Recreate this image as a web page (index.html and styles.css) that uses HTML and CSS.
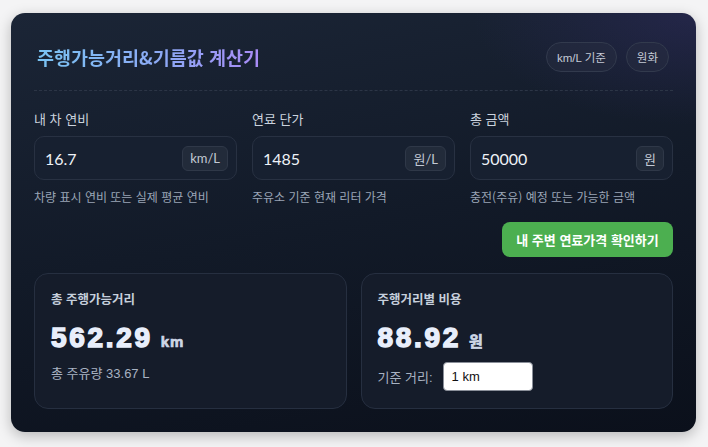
FILE: index.html
```html
<!DOCTYPE html>
<html lang="ko">
<head>
<meta charset="utf-8">
<link rel="stylesheet" href="styles.css">
</head>
<body>
<div class="card">
  <div class="head">
    <h1 class="title">주행가능거리&amp;기름값 계산기</h1>
    <div class="pills">
      <span class="pill">km/L 기준</span>
      <span class="pill">원화</span>
    </div>
  </div>
  <div class="fields">
    <div class="field">
      <div class="label">내 차 연비</div>
      <div class="box"><span class="val">16.7</span><span class="unit">km/L</span></div>
      <div class="help">차량 표시 연비 또는 실제 평균 연비</div>
    </div>
    <div class="field">
      <div class="label">연료 단가</div>
      <div class="box"><span class="val">1485</span><span class="unit">원/L</span></div>
      <div class="help">주유소 기준 현재 리터 가격</div>
    </div>
    <div class="field">
      <div class="label">총 금액</div>
      <div class="box"><span class="val">50000</span><span class="unit">원</span></div>
      <div class="help">충전(주유) 예정 또는 가능한 금액</div>
    </div>
  </div>
  <div class="actions">
    <button class="btn">내 주변 연료가격 확인하기</button>
  </div>
  <div class="results">
    <div class="res">
      <div class="res-title">총 주행가능거리</div>
      <div class="big"><span class="num">562.29</span><span class="u">km</span></div>
      <div class="sub">총 주유량 33.67 L</div>
    </div>
    <div class="res">
      <div class="res-title">주행거리별 비용</div>
      <div class="big"><span class="num">88.92</span><span class="u">원</span></div>
      <div class="sub row"><span>기준 거리:</span><span class="sel">1 km</span></div>
    </div>
  </div>
</div>
</body>
</html>
```
FILE: styles.css
```css
* { box-sizing: border-box; }
html, body { margin: 0; }
body {
  background: #f4f4f5;
  padding: 13px 12px 15px 11px;
  font-family: Lato, "Noto Sans CJK KR", sans-serif;
}
.card {
  height: 419px;
  border-radius: 14px;
  padding: 23px 23px 0 23px;
  background:
    radial-gradient(ellipse 320px 160px at 100% 0%, rgba(60, 50, 120, 0.35), transparent 70%),
    linear-gradient(170deg, #1b2536 0%, #121a28 50%, #0b101b 100%);
  box-shadow: 0 4px 14px rgba(0, 0, 0, 0.25);
  color: #e2e8f0;
}
.head {
  display: flex;
  justify-content: space-between;
  align-items: center;
  padding: 6px 4px 18px 3px;
  border-bottom: 1px dashed #2c3546;
}
.title {
  margin: 0;
  font-family: "Noto Sans CJK KR", sans-serif;
  font-size: 18.5px;
  font-weight: 700;
  line-height: 26px;
  background: linear-gradient(90deg, #79c3f2 0%, #8ea6f5 60%, #a98bf6 100%);
  -webkit-background-clip: text;
  background-clip: text;
  color: transparent;
}
.pills { display: flex; gap: 9px; }
.pill {
  height: 30px;
  padding: 0 10px;
  display: flex;
  align-items: center;
  border: 1px solid #323a4d;
  border-radius: 16px;
  background: rgba(40, 46, 66, 0.5);
  font-family: "Liberation Sans", "Noto Sans CJK KR", sans-serif;
  font-size: 11.5px;
  color: #c4cad6;
}
.fields {
  display: grid;
  grid-template-columns: 1fr 1fr 1fr;
  gap: 15px;
  margin-top: 19px;
}
.label {
  font-family: "Noto Sans CJK KR", sans-serif;
  font-size: 13px;
  color: #cbd3de;
  line-height: 18px;
}
.box {
  margin-top: 8px;
  height: 44px;
  border: 1px solid #283142;
  border-radius: 10px;
  background: #172030;
  display: flex;
  align-items: center;
  justify-content: space-between;
  padding: 0 8px 0 10px;
}
.val { font-size: 16px; color: #eef2f7; }
.unit {
  height: 25px;
  padding: 0 7px;
  display: flex;
  align-items: center;
  border: 1px solid #2f3848;
  border-radius: 6px;
  background: #222b3a;
  font-family: Lato, "Noto Sans CJK KR", sans-serif;
  font-size: 13px;
  color: #c2c9d4;
}
.help {
  margin-top: 9px;
  font-family: "Noto Sans CJK KR", sans-serif;
  font-size: 12px;
  color: #9aa5b6;
  line-height: 16px;
}
.actions {
  display: flex;
  justify-content: flex-end;
  margin-top: 17px;
}
.btn {
  height: 35px;
  padding: 0 14px;
  border: none;
  border-radius: 8px;
  background: #4caf50;
  color: #fff;
  font-family: "Noto Sans CJK KR", sans-serif;
  font-size: 13px;
  font-weight: 700;
  width: 171px;
}
.results {
  display: grid;
  grid-template-columns: 1fr 1fr;
  gap: 14px;
  margin-top: 16px;
}
.res {
  height: 136px;
  border: 1px solid #262f40;
  border-radius: 14px;
  background: #151c2a;
  padding: 16px 16px 0 16px;
}
.res-title {
  font-family: "Noto Sans CJK KR", sans-serif;
  font-size: 12.5px;
  font-weight: 700;
  color: #c6cfdc;
  line-height: 18px;
}
.big {
  margin-top: 12px;
  display: flex;
  align-items: baseline;
  gap: 8px;
  color: #e8eefb;
  font-family: "Liberation Sans", "Noto Sans CJK KR", sans-serif;
  font-weight: 700;
}
.num {
  font-size: 28px;
  letter-spacing: 2.7px;
  -webkit-text-stroke: 1.5px #e8eefb;
  line-height: 36px;
}
.u {
  font-size: 15px;
  color: #cdd6e6;
  -webkit-text-stroke: 0.7px #cdd6e6;
  letter-spacing: 0.8px;
}
.sub {
  margin-top: 7px;
  font-family: "Liberation Sans", "Noto Sans CJK KR", sans-serif;
  font-size: 13px;
  color: #a8b2c2;
}
.row { display: flex; align-items: center; gap: 10px; margin-top: 6px; }
.sel {
  width: 90px;
  height: 29px;
  border: 1px solid #8a8f99;
  border-radius: 4px;
  background: #fff;
  color: #111;
  padding: 0 8px;
  display: flex;
  align-items: center;
  font-size: 13px;
}
```
